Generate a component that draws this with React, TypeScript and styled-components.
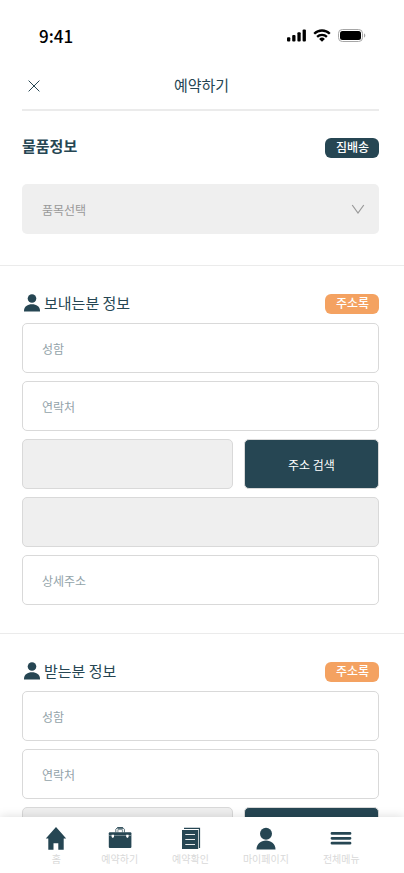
import React from "react";
import styled, { createGlobalStyle } from "styled-components";

const NAVY = "#264653";
const ORANGE = "#f4a261";

const GlobalStyle = createGlobalStyle`
  *, *::before, *::after { box-sizing: border-box; }
  body { margin: 0; background: #fff; color: ${NAVY}; }
  body, button, input, select {
    font-family: "Noto Sans CJK KR", "Noto Sans", sans-serif;
  }
  h1, h2 { margin: 0; }
`;

const Screen = styled.div`
  display: flex;
  flex-direction: column;
  height: 100vh;
  overflow: hidden;
`;

const StatusBar = styled.div`
  flex: none;
  display: flex;
  align-items: center;
  justify-content: space-between;
  height: 61px;
  padding: 10px 38px 0 39px;
  color: #000;
`;

const Clock = styled.time`
  font-size: 17px;
  font-weight: 500;
  line-height: 24px;
`;

const StatusIcons = styled.div`
  display: flex;
  align-items: center;
  gap: 7px;
`;

const Header = styled.header`
  flex: none;
  display: grid;
  grid-template-columns: 24px 1fr 22px;
  align-items: center;
  height: 50px;
  margin: 0 25px 0 22px;
  border-bottom: 2px solid #ebebeb;
`;

const CloseButton = styled.button`
  display: grid;
  place-items: center;
  width: 24px;
  height: 24px;
  padding: 2px 0 0;
  border: 0;
  background: none;
  color: ${NAVY};
`;

const PageTitle = styled.h1`
  font-size: 15px;
  font-weight: 400;
  line-height: 24px;
  text-align: center;
`;

const Content = styled.main`
  flex: 1;
  min-height: 0;
  overflow-y: auto;
  scrollbar-width: none;
`;

const Section = styled.section<{ $first?: boolean }>`
  padding: ${(p) => (p.$first ? "27px 25px 31px 22px" : "28px 25px 28px 22px")};
  & + & { border-top: 1px solid #ebebeb; }
`;

const SectionHead = styled.div<{ $gap: number }>`
  display: flex;
  align-items: flex-start;
  justify-content: space-between;
  height: 20px;
  margin-bottom: ${(p) => p.$gap}px;
`;

const SectionTitle = styled.h2<{ $bold?: boolean }>`
  display: flex;
  align-items: center;
  gap: 4px;
  padding-left: ${(p) => (p.$bold ? 0 : 2)}px;
  font-size: 15px;
  font-weight: ${(p) => (p.$bold ? 700 : 400)};
  line-height: ${(p) => (p.$bold ? 16 : 18)}px;
`;

const Badge = styled.button<{ $color: string }>`
  width: 54px;
  height: 20px;
  padding: 0 0 2px 1px;
  border: 0;
  border-radius: 6px;
  background: ${(p) => p.$color};
  color: #fff;
  font-size: 12px;
  font-weight: 500;
  line-height: 18px;
`;

const SelectBox = styled.div`
  display: grid;
  align-items: center;
  & > * { grid-area: 1 / 1; }
  & > svg { justify-self: end; margin-right: 14px; pointer-events: none; }
`;

const Select = styled.select`
  appearance: none;
  width: 100%;
  height: 50px;
  padding: 0 40px 0 20px;
  border: 0;
  border-radius: 5px;
  background: #efefef;
  color: #999;
  font-size: 12px;
`;

const Fields = styled.div`
  display: grid;
  gap: 8px;
`;

const Input = styled.input`
  width: 100%;
  min-width: 0;
  height: 50px;
  padding: 0 19px;
  border: 1px solid #d9d9d9;
  border-radius: 5px;
  background: #fff;
  color: ${NAVY};
  font-size: 12px;
  &::placeholder { color: #93a3a9; opacity: 1; }
  &:read-only { background: #efefef; }
`;

const AddressRow = styled.div`
  display: grid;
  grid-template-columns: 211fr 135fr;
  gap: 11px;
`;

const SearchButton = styled.button`
  height: 50px;
  padding: 1px 0 0;
  border: 1px solid #d9d9d9;
  border-radius: 5px;
  background: ${NAVY};
  color: #fff;
  font-size: 12px;
`;

const TabBar = styled.nav`
  flex: none;
  display: flex;
  justify-content: center;
  gap: 34px;
  height: 56px;
  padding: 9px 0 0 1px;
  background: #fff;
  box-shadow: 0 0 10px rgba(0, 0, 0, 0.15);
  z-index: 1;
`;

const Tab = styled.a`
  display: flex;
  flex-direction: column;
  align-items: center;
  min-width: 22px;
  color: #d9d9d9;
  font-size: 10px;
  line-height: 16px;
  white-space: nowrap;
  text-decoration: none;
`;

const SignalIcon = () => (
  <svg width="20" height="13" viewBox="0 0 20 13" aria-hidden="true">
    <rect x="1" y="8.3" width="3.300" height="4.200" rx="1" />
    <rect x="6.200" y="6" width="3.300" height="6.500" rx="1" />
    <rect x="11.400" y="3.300" width="3.300" height="9.200" rx="1" />
    <rect x="16.600" y="0.400" width="3.300" height="12.100" rx="1" />
  </svg>
);

const WifiIcon = () => (
  <svg width="18" height="13" viewBox="0 0 18 13" aria-hidden="true">
    <g fill="none" stroke="#000" strokeWidth="2.3">
      <path d="M1.2 4.7a11.1 11.1 0 0 1 15.6 0" />
      <path d="M4.1 7.9a7 7 0 0 1 9.8 0" />
    </g>
    <path d="M9 12.8 6.1 9.9a4.1 4.1 0 0 1 5.8 0Z" />
  </svg>
);

const BatteryIcon = () => (
  <svg width="28" height="13" viewBox="0 0 28 13" aria-hidden="true">
    <rect x="0.5" y="0.5" width="24" height="12" rx="3.8" fill="none" stroke="#a6a6a6" />
    <rect x="2" y="2" width="21" height="9" rx="2.5" />
    <path d="M26 4.5v4c.8-.3 1.3-1.1 1.3-2s-.5-1.7-1.3-2Z" fill="#a6a6a6" />
  </svg>
);

const CloseIcon = () => (
  <svg width="12" height="12" viewBox="0 0 12 12" fill="none" stroke="currentColor" aria-hidden="true">
    <path d="M.6.6l10.8 10.8M11.4.6.6 11.4" />
  </svg>
);

const ChevronIcon = () => (
  <svg width="14" height="10" viewBox="0 0 14 10" fill="none" stroke="#999" strokeWidth="1.200" aria-hidden="true">
    <path d="M1.200 1 7 9 12.800 1" />
  </svg>
);

const PersonIcon = () => (
  <svg width="16" height="18" viewBox="0 0 16 18" fill={NAVY} aria-hidden="true">
    <circle cx="8" cy="4.500" r="4.300" />
    <path d="M0 17.600v-1c0-4 3.600-6.300 8-6.300s8 2.300 8 6.300v1Z" />
  </svg>
);

const HomeIcon = () => (
  <svg width="22" height="25" viewBox="0 0 22 25" fill={NAVY} aria-hidden="true">
    <path d="M11 1 .8 12.500h2.500V23.700h5.200v-6.500h4.800v6.500h5.400V12.500h2.500Z" />
  </svg>
);

const BriefcaseIcon = () => (
  <svg width="24" height="25" viewBox="0 0 24 25" aria-hidden="true">
    <path d="M7.800 6.500V3.300L9.500 1.500h5.200l1.700 1.800v3.200" fill="none" stroke={NAVY} strokeWidth="0.800" />
    <path d="M9.900 6.500V3.600h4.500v2.900" fill="none" stroke={NAVY} strokeWidth="0.600" />
    <path d="M9.300 2.100h5.700" stroke={NAVY} strokeWidth="1.300" />
    <rect x="0.800" y="6.200" width="22.600" height="15.700" rx="1" fill={NAVY} />
    <path d="M1 9.500h22" stroke="#fff" strokeWidth="0.350" />
    <path d="M3.600 8.700h2.400v2.200L4.800 12.100 3.600 10.900ZM18.200 8.700h2.400v2.200l-1.200 1.200-1.200-1.200Z" fill="#fff" />
  </svg>
);

const DocumentIcon = () => (
  <svg width="20" height="25" viewBox="0 0 20 25" aria-hidden="true">
    <path d="M3 2.300h15.500V22" fill="none" stroke={NAVY} strokeWidth="1.200" />
    <rect x="1" y="4" width="16.200" height="19" fill={NAVY} />
    <path d="M4.300 8.500h9.700M4.300 13.500h9.700M4.300 18.500h9.700" stroke="#fff" strokeWidth="0.900" />
  </svg>
);

const ProfileIcon = () => (
  <svg width="20" height="25" viewBox="0 0 20 25" fill={NAVY} aria-hidden="true">
    <circle cx="10" cy="7.800" r="6" />
    <path d="M.5 23.500c0-5.500 4.200-9 9.500-9s9.500 3.500 9.500 9Z" />
  </svg>
);

const MenuIcon = () => (
  <svg width="22" height="25" viewBox="0 0 22 25" stroke={NAVY} strokeWidth="2.800" strokeLinecap="round" aria-hidden="true">
    <path d="M2 7.400h18M2 12.300h18M2 17.200h18" />
  </svg>
);

const ContactSection = ({ title }: { title: string }) => (
  <Section>
    <SectionHead $gap={9}>
      <SectionTitle>
        <PersonIcon />
        {title}
      </SectionTitle>
      <Badge type="button" $color={ORANGE}>주소록</Badge>
    </SectionHead>
    <Fields>
      <Input type="text" placeholder="성함" aria-label={`${title} 성함`} />
      <Input type="tel" placeholder="연락처" aria-label={`${title} 연락처`} />
      <AddressRow>
        <Input type="text" readOnly aria-label={`${title} 우편번호`} />
        <SearchButton type="button">주소 검색</SearchButton>
      </AddressRow>
      <Input type="text" readOnly aria-label={`${title} 주소`} />
      <Input type="text" placeholder="상세주소" aria-label={`${title} 상세주소`} />
    </Fields>
  </Section>
);

const tabs = [
  { label: "홈", Icon: HomeIcon },
  { label: "예약하기", Icon: BriefcaseIcon },
  { label: "예약확인", Icon: DocumentIcon },
  { label: "마이페이지", Icon: ProfileIcon },
  { label: "전체메뉴", Icon: MenuIcon },
];

export default function App() {
  return (
    <Screen>
      <GlobalStyle />
      <StatusBar>
        <Clock>9:41</Clock>
        <StatusIcons>
          <SignalIcon />
          <WifiIcon />
          <BatteryIcon />
        </StatusIcons>
      </StatusBar>
      <Header>
        <CloseButton type="button" aria-label="닫기">
          <CloseIcon />
        </CloseButton>
        <PageTitle>예약하기</PageTitle>
      </Header>
      <Content>
        <Section $first>
          <SectionHead $gap={26}>
            <SectionTitle $bold>물품정보</SectionTitle>
            <Badge type="button" $color={NAVY}>짐배송</Badge>
          </SectionHead>
          <SelectBox>
            <Select aria-label="품목선택" defaultValue="">
              <option value="">품목선택</option>
            </Select>
            <ChevronIcon />
          </SelectBox>
        </Section>
        <ContactSection title="보내는분 정보" />
        <ContactSection title="받는분 정보" />
      </Content>
      <TabBar>
        {tabs.map(({ label, Icon }) => (
          <Tab key={label} href="#">
            <Icon />
            {label}
          </Tab>
        ))}
      </TabBar>
    </Screen>
  );
}
